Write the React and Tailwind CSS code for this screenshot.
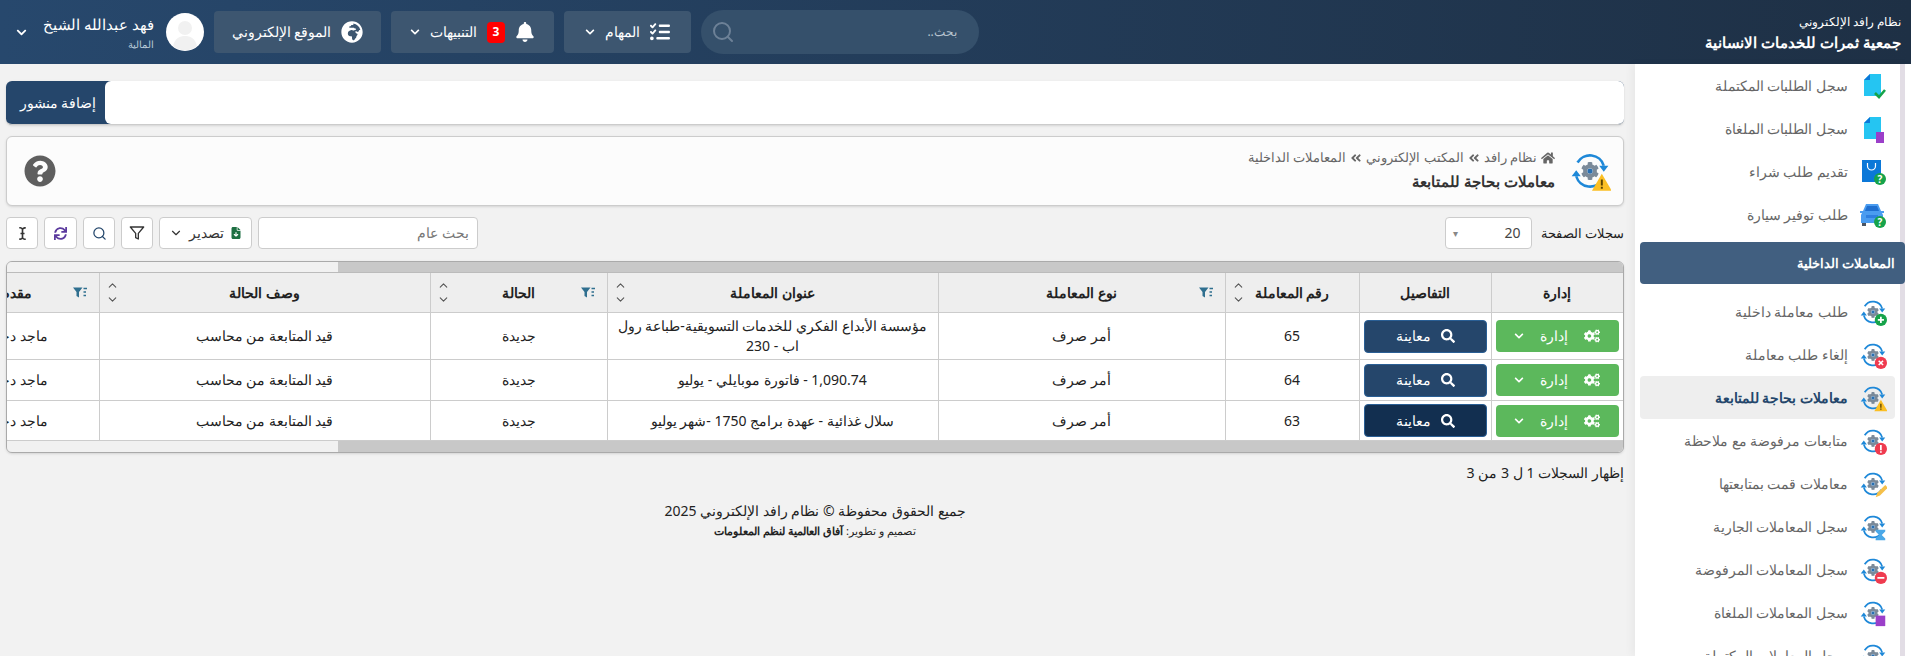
import { FaBell, FaChevronDown, FaCog, FaCogs, FaGlobeAfrica, FaHome, FaICursor, FaQuestionCircle, FaSearch, FaSync, FaAngleDoubleLeft } from "react-icons/fa";
import { FaFileArrowDown, FaListCheck } from "react-icons/fa6";
import { LuChevronDown, LuChevronUp, LuFilter, LuSearch } from "react-icons/lu";

const font = "font-['Noto_Sans',sans-serif]";

function Badge({ type }) {
  if (type === "plus") return <g><circle cx="25" cy="25" r="7" fill="#16a34a" /><path d="M21.5 25h7M25 21.5v7" stroke="#fff" strokeWidth="2" /></g>;
  if (type === "x") return <g><circle cx="25" cy="25" r="7" fill="#ef3b4f" /><path d="M22.5 22.5l5 5M27.5 22.5l-5 5" stroke="#fff" strokeWidth="1.8" /></g>;
  if (type === "warn") return <g><path d="M25 18l7.500 13h-15z" fill="#fbbf24" /><path d="M25 22.500v4.500M25 28v1.500" stroke="#5b4300" strokeWidth="1.500" /></g>;
  if (type === "alert") return <g><circle cx="25" cy="25" r="7" fill="#ef3b4f" /><path d="M25 20.5v6M25 27.8v1.7" stroke="#fff" strokeWidth="2" /></g>;
  if (type === "pen") return <path d="M19 31l2-5 9-9 3 3-9 9z" fill="#f5c04a" />;
  if (type === "hour") return <path d="M19 19h11v2l-4 4 4 4v2H19v-2l4-4-4-4z" fill="#4aa8e8" />;
  if (type === "minus") return <g><circle cx="25" cy="25" r="7" fill="#ef3b4f" /><path d="M21 25h8" stroke="#fff" strokeWidth="2" /></g>;
  if (type === "book") return <path d="M19 19h11v12H19z" fill="#9b3fc9" />;
  return null;
}

function GearIcon({ badge, size = 28 }) {
  return (
    <svg width={size} height={size} viewBox="0 0 32 32" fill="none" className="shrink-0">
      <path d="M6.500 9.500A11 11 0 0 1 26.500 12" stroke="#1e88d8" strokeWidth="2" />
      <path d="M25.500 22.500A11 11 0 0 1 5.500 20" stroke="#1e88d8" strokeWidth="2" />
      <path d="M23 12h7l-3.500 4.500zM2 20h7l-3.500-4.500z" fill="#1e88d8" />
      <FaCog x="9" y="9" size={14} color="#7b8a99" />
      <circle cx="16" cy="16" r="2" fill="#2a6fb0" />
      <Badge type={badge} />
    </svg>
  );
}

function DocIcon({ kind }) {
  if (kind === "bag") {
    return (
      <svg width="28" height="28" viewBox="0 0 28 28" className="shrink-0">
        <rect x="3" y="2" width="19" height="22" fill="#0b78d8" />
        <path d="M8.500 5v3a4 4 0 0 0 8 0V5" fill="none" stroke="#fff" strokeWidth="1.200" />
        <circle cx="21" cy="21" r="6" fill="#16a34a" />
        <text x="21" y="24.500" textAnchor="middle" fontSize="10" fontWeight="700" fill="#fff">?</text>
      </svg>
    );
  }
  if (kind === "car") {
    return (
      <svg width="28" height="28" viewBox="0 0 28 28" className="shrink-0">
        <path d="M7 3h12l3 7h3v2h-2l1 2v8H2v-8l1-2H1v-2h3z" fill="#4a9cf0" />
        <path d="M8 5h10l2 5H6z" fill="#1f6fd0" />
        <path d="M7 14h12v3H7z" fill="#2f7fe0" />
        <rect x="3" y="22" width="4" height="3" fill="#4b5563" />
        <circle cx="21" cy="21" r="6" fill="#16a34a" />
        <text x="21" y="24.500" textAnchor="middle" fontSize="10" fontWeight="700" fill="#fff">?</text>
      </svg>
    );
  }
  return (
    <svg width="28" height="28" viewBox="0 0 28 28" className="shrink-0">
      <path d="M11 2h11v22H5V8z" fill="#25c5f2" />
      <path d="M11 2v6H5z" fill="#0b78d8" />
      {kind === "check" && <path d="M16 21l4 4 6-7" fill="none" stroke="#16a34a" strokeWidth="2.600" />}
      {kind === "book" && <path d="M17 17h8v11h-8z" fill="#9b3fc9" />}
    </svg>
  );
}

function FilterIcon() {
  return (
    <svg width="14" height="11" viewBox="0 0 14 11" className="shrink-0">
      <path d="M0 .5h9.500L6 5v5.500L3.500 9V5z" fill="#2f6f8f" />
      <path d="M10.500 1.500H14M10.500 5H13M10.500 8.500H13" stroke="#2f6f8f" strokeWidth="1.500" />
    </svg>
  );
}

function SortArrows() {
  return (
    <div className="flex h-full flex-col items-end justify-between py-1.5 text-[#555]">
      <LuChevronUp size={13} />
      <LuChevronDown size={13} />
    </div>
  );
}

function TopButton({ icon, label, chevron, badge, w }) {
  return (
    <div className={`flex h-[42px] items-center justify-center gap-[10px] rounded bg-[#3d5670] text-sm text-white ${w}`}>
      {icon}
      {badge && <span className="flex h-[21px] w-[18px] items-center justify-center rounded-sm bg-[#f00] text-xs font-bold">{badge}</span>}
      <span>{label}</span>
      {chevron && <FaChevronDown size={10} />}
    </div>
  );
}

const topItems = [
  { label: "سجل الطلبات المكتملة", icon: <DocIcon kind="check" /> },
  { label: "سجل الطلبات الملغاة", icon: <DocIcon kind="book" /> },
  { label: "تقديم طلب شراء", icon: <DocIcon kind="bag" /> },
  { label: "طلب توفير سيارة", icon: <DocIcon kind="car" /> },
];

const subItems = [
  { label: "طلب معاملة داخلية", badge: "plus" },
  { label: "إلغاء طلب معاملة", badge: "x" },
  { label: "معاملات بحاجة للمتابعة", badge: "warn", active: true },
  { label: "متابعات مرفوضة مع ملاحظة", badge: "alert" },
  { label: "معاملات قمت بمتابعتها", badge: "pen" },
  { label: "سجل المعاملات الجارية", badge: "hour" },
  { label: "سجل المعاملات المرفوضة", badge: "minus" },
  { label: "سجل المعاملات الملغاة", badge: "book" },
  { label: "سجل المعاملات المكتملة", badge: "plus" },
];

function SideItem({ label, icon, active }) {
  return (
    <div className={`mx-[5px] flex h-[43px] shrink-0 items-center gap-[11px] rounded pr-2 ${active ? "bg-[#eeeeee] font-bold text-[#23466b]" : "text-[#666]"}`}>
      {icon}
      <span className="text-sm">{label}</span>
    </div>
  );
}

const rows = [
  { id: 65, h: "h-[47px]", title: "مؤسسة الأبداع الفكري للخدمات التسويقية-طباعة رول اب - 230", btn: "bg-[#25466b]" },
  { id: 64, h: "h-[41px]", title: "1,090.74 - فاتورة موبايلي - يوليو", btn: "bg-[#25466b]" },
  { id: 63, h: "h-[40px]", title: "سلال غذائية - عهدة برامج 1750 -شهر يوليو", btn: "bg-[#122f50]" },
];

function Th({ children, w, filter, sort }) {
  return (
    <th className={`${w} h-[39px] border-b border-l border-[#ccc] bg-[#eeeeee] p-0 text-sm font-bold text-[#222]`}>
      <div className="grid h-[39px] grid-cols-[14px_1fr_20px] items-center pl-1.5 pr-3">
        <span className="flex justify-start">{filter && <FilterIcon />}</span>
        <span className="text-center whitespace-nowrap">{children}</span>
        <span className="h-full">{sort && <SortArrows />}</span>
      </div>
    </th>
  );
}

function ScrollRow({ h }) {
  return (
    <div className={`flex bg-[#c8c8c8] ${h}`}>
      <div className="flex-1" />
      <div className="w-[331px] bg-[#f1f1f1]" />
    </div>
  );
}

export default function App() {
  return (
    <div dir="rtl" className={`${font} h-[656px] overflow-hidden bg-[#f2f2f2] text-sm text-[#222]`}>
      <header className="flex h-16 items-center justify-between bg-gradient-to-l from-[#1e3045] to-[#27486d] pl-4 pr-[10px]">
        <div className="text-white">
          <div className="text-xs leading-5">نظام رافد الإلكتروني</div>
          <div className="text-[15px] font-bold leading-5">جمعية ثمرات للخدمات الانسانية</div>
        </div>
        <div className="flex items-center gap-2.5">
          <div className="flex h-11 w-[278px] items-center justify-between rounded-full bg-[#35506b] px-[22px] text-xs text-[#b8c4d0]">
            <span>بحث..</span>
            <LuSearch size={24} className="-ml-3 text-[#6d8197]" />
          </div>
          <TopButton w="w-[127px]" icon={<FaListCheck size={20} />} label="المهام" chevron />
          <TopButton w="w-[163px]" icon={<FaBell size={20} />} label="التنبيهات" badge="3" chevron />
          <TopButton w="w-[167px]" icon={<FaGlobeAfrica size={22} />} label="الموقع الإلكتروني" />
          <div className="flex items-center gap-3 text-white">
            <svg width="38" height="38" viewBox="0 0 38 38" className="shrink-0">
              <circle cx="19" cy="19" r="19" fill="#fff" />
              <circle cx="19" cy="15" r="7" fill="#f1f1f1" />
              <path d="M7 33c2-8 7-10 12-10s10 2 12 10a19 19 0 0 1-24 0z" fill="#f1f1f1" />
            </svg>
            <div>
              <div className="text-[15px] leading-5">فهد عبدالله الشيخ</div>
              <div className="mt-1 text-[10px] leading-3 text-[#b7c9d8]">المالية</div>
            </div>
            <FaChevronDown size={11} className="mr-1" />
          </div>
        </div>
      </header>

      <div className="flex h-[592px]">
        <aside className="w-[276px] shrink-0 overflow-hidden bg-white pr-[6px] shadow-[-4px_0_8px_rgba(0,0,0,0.04)]">
          <div className="flex flex-col border-r-[5px] border-[#e2dde5]">
            {topItems.map((item) => <SideItem key={item.label} {...item} />)}
            <div className="h-[6px] bg-white" />
            <div className="-mr-[5px] ml-[5px] flex h-[42px] shrink-0 items-center rounded bg-[#415f80] pr-2.5 text-[13px] font-bold text-white">المعاملات الداخلية</div>
            <div className="h-[6px] bg-white" />
            {subItems.map((item) => <SideItem key={item.label} label={item.label} active={item.active} icon={<GearIcon badge={item.badge} />} />)}
          </div>
        </aside>

        <main className="min-w-0 flex-1 pl-[6px] pr-[11px] pt-[17px]">
          <div className="flex h-11 overflow-hidden rounded-md border-b border-[#ccc] bg-[#25466b] shadow-sm">
            <div className="flex-1 rounded-l-md bg-white" />
            <div className="flex w-[99px] items-center justify-center pl-[5px] text-sm text-white">إضافة منشور</div>
          </div>

          <div className="mt-[11px] flex h-[70px] items-center justify-between rounded-md border border-[#ccc] bg-[#fcfcfc] pl-[17px] pr-3 shadow-sm">
            <div className="flex items-center gap-3.5">
              <GearIcon badge="warn" size={42} />
              <div>
                <div className="flex items-center gap-1 text-[12.500px] text-[#666]">
                  <FaHome size={14} />
                  <span>نظام رافد</span>
                  <FaAngleDoubleLeft size={12} />
                  <span>المكتب الإلكتروني</span>
                  <FaAngleDoubleLeft size={12} />
                  <span>المعاملات الداخلية</span>
                </div>
                <div className="mt-1 text-[15px] font-bold text-[#333]">معاملات بحاجة للمتابعة</div>
              </div>
            </div>
            <FaQuestionCircle size={32} className="text-[#5f5f5f]" />
          </div>

          <div className="mt-[11px] flex h-8 items-center justify-between">
            <div className="flex items-center gap-[9px]">
              <span className="text-[13.200px]">سجلات الصفحة</span>
              <div className="flex h-8 w-[87px] items-center justify-between rounded border border-[#ccc] bg-white pl-[7px] pr-2.5 text-[#444]">
                <span>20</span>
                <span className="text-[10px] text-[#888]">▾</span>
              </div>
            </div>
            <div className="flex items-center gap-[6px]">
              <div className="flex h-8 w-[220px] items-center rounded border border-[#ccc] bg-white px-2 text-sm text-[#777]">بحث عام</div>
              <div className="flex h-8 w-[93px] items-center justify-center gap-1.5 rounded border border-[#ccc] bg-white text-sm text-[#333]">
                <FaFileArrowDown size={12} className="text-[#1d6f42]" />
                <span>تصدير</span>
                <LuChevronDown size={14} />
              </div>
              <div className="flex h-8 w-8 items-center justify-center rounded border border-[#ccc] bg-white"><LuFilter size={16} className="text-[#333]" /></div>
              <div className="flex h-8 w-8 items-center justify-center rounded border border-[#ccc] bg-white"><LuSearch size={15} className="text-[#23466b]" /></div>
              <div className="flex h-8 w-[33px] items-center justify-center rounded border border-[#ccc] bg-white"><FaSync size={13} className="text-[#5b3a9e]" /></div>
              <div className="flex h-8 w-8 items-center justify-center rounded border border-[#ccc] bg-white"><FaICursor size={13} className="text-[#333]" /></div>
            </div>
          </div>

          <div className="mt-3 overflow-hidden rounded-md border border-[#aaa] bg-white shadow-sm">
            <ScrollRow h="h-[10px]" />
            <div className="overflow-hidden border-t border-[#bbb]">
              <table className="w-[1730px] table-fixed border-collapse">
                <thead>
                  <tr>
                    <Th w="w-[132px]">إدارة</Th>
                    <Th w="w-[132px]">التفاصيل</Th>
                    <Th w="w-[134px]" sort>رقم المعاملة</Th>
                    <Th w="w-[287px]" filter>نوع المعاملة</Th>
                    <Th w="w-[331px]" sort>عنوان المعاملة</Th>
                    <Th w="w-[177px]" filter sort>الحالة</Th>
                    <Th w="w-[331px]" sort>وصف الحالة</Th>
                    <Th w="w-[206px]" filter>مقدم الطلب</Th>
                  </tr>
                </thead>
                <tbody>
                  {rows.map((row) => (
                    <tr key={row.id} className={`${row.h} border-b border-[#ccc] text-center text-[#222]`}>
                      <td className="border-l border-[#ccc] px-[4px]">
                        <div className="flex h-8 items-center justify-center gap-4 rounded bg-[#5cb85c] text-white">
                          <FaCogs size={16} />
                          <span>إدارة</span>
                          <FaChevronDown size={10} />
                        </div>
                      </td>
                      <td className="border-l border-[#ccc] px-[4px]">
                        <div className={`flex h-[33px] items-center justify-center gap-2.5 rounded border border-[#2a5f95] text-white ${row.btn}`}>
                          <FaSearch size={14} />
                          <span>معاينة</span>
                        </div>
                      </td>
                      <td className="border-l border-[#ccc]">{row.id}</td>
                      <td className="border-l border-[#ccc]">أمر صرف</td>
                      <td className="border-l border-[#ccc] px-2 leading-[20px]">{row.title}</td>
                      <td className="border-l border-[#ccc]">جديدة</td>
                      <td className="border-l border-[#ccc]">قيد المتابعة من محاسب</td>
                      <td className="whitespace-nowrap">ماجد دخيل العتيبي</td>
                    </tr>
                  ))}
                </tbody>
              </table>
            </div>
            <ScrollRow h="h-[11px]" />
          </div>

          <div className="mt-2.5 text-[14.200px]">إظهار السجلات 1 ل 3 من 3</div>
          <div className="mt-[18px] text-center text-sm">جميع الحقوق محفوظة © نظام رافد الإلكتروني 2025</div>
          <div className="mt-0.5 text-center text-[11.200px]">تصميم و تطوير: <span className="font-bold">آفاق العالمية لنظم المعلومات</span></div>
        </main>
      </div>
    </div>
  );
}
